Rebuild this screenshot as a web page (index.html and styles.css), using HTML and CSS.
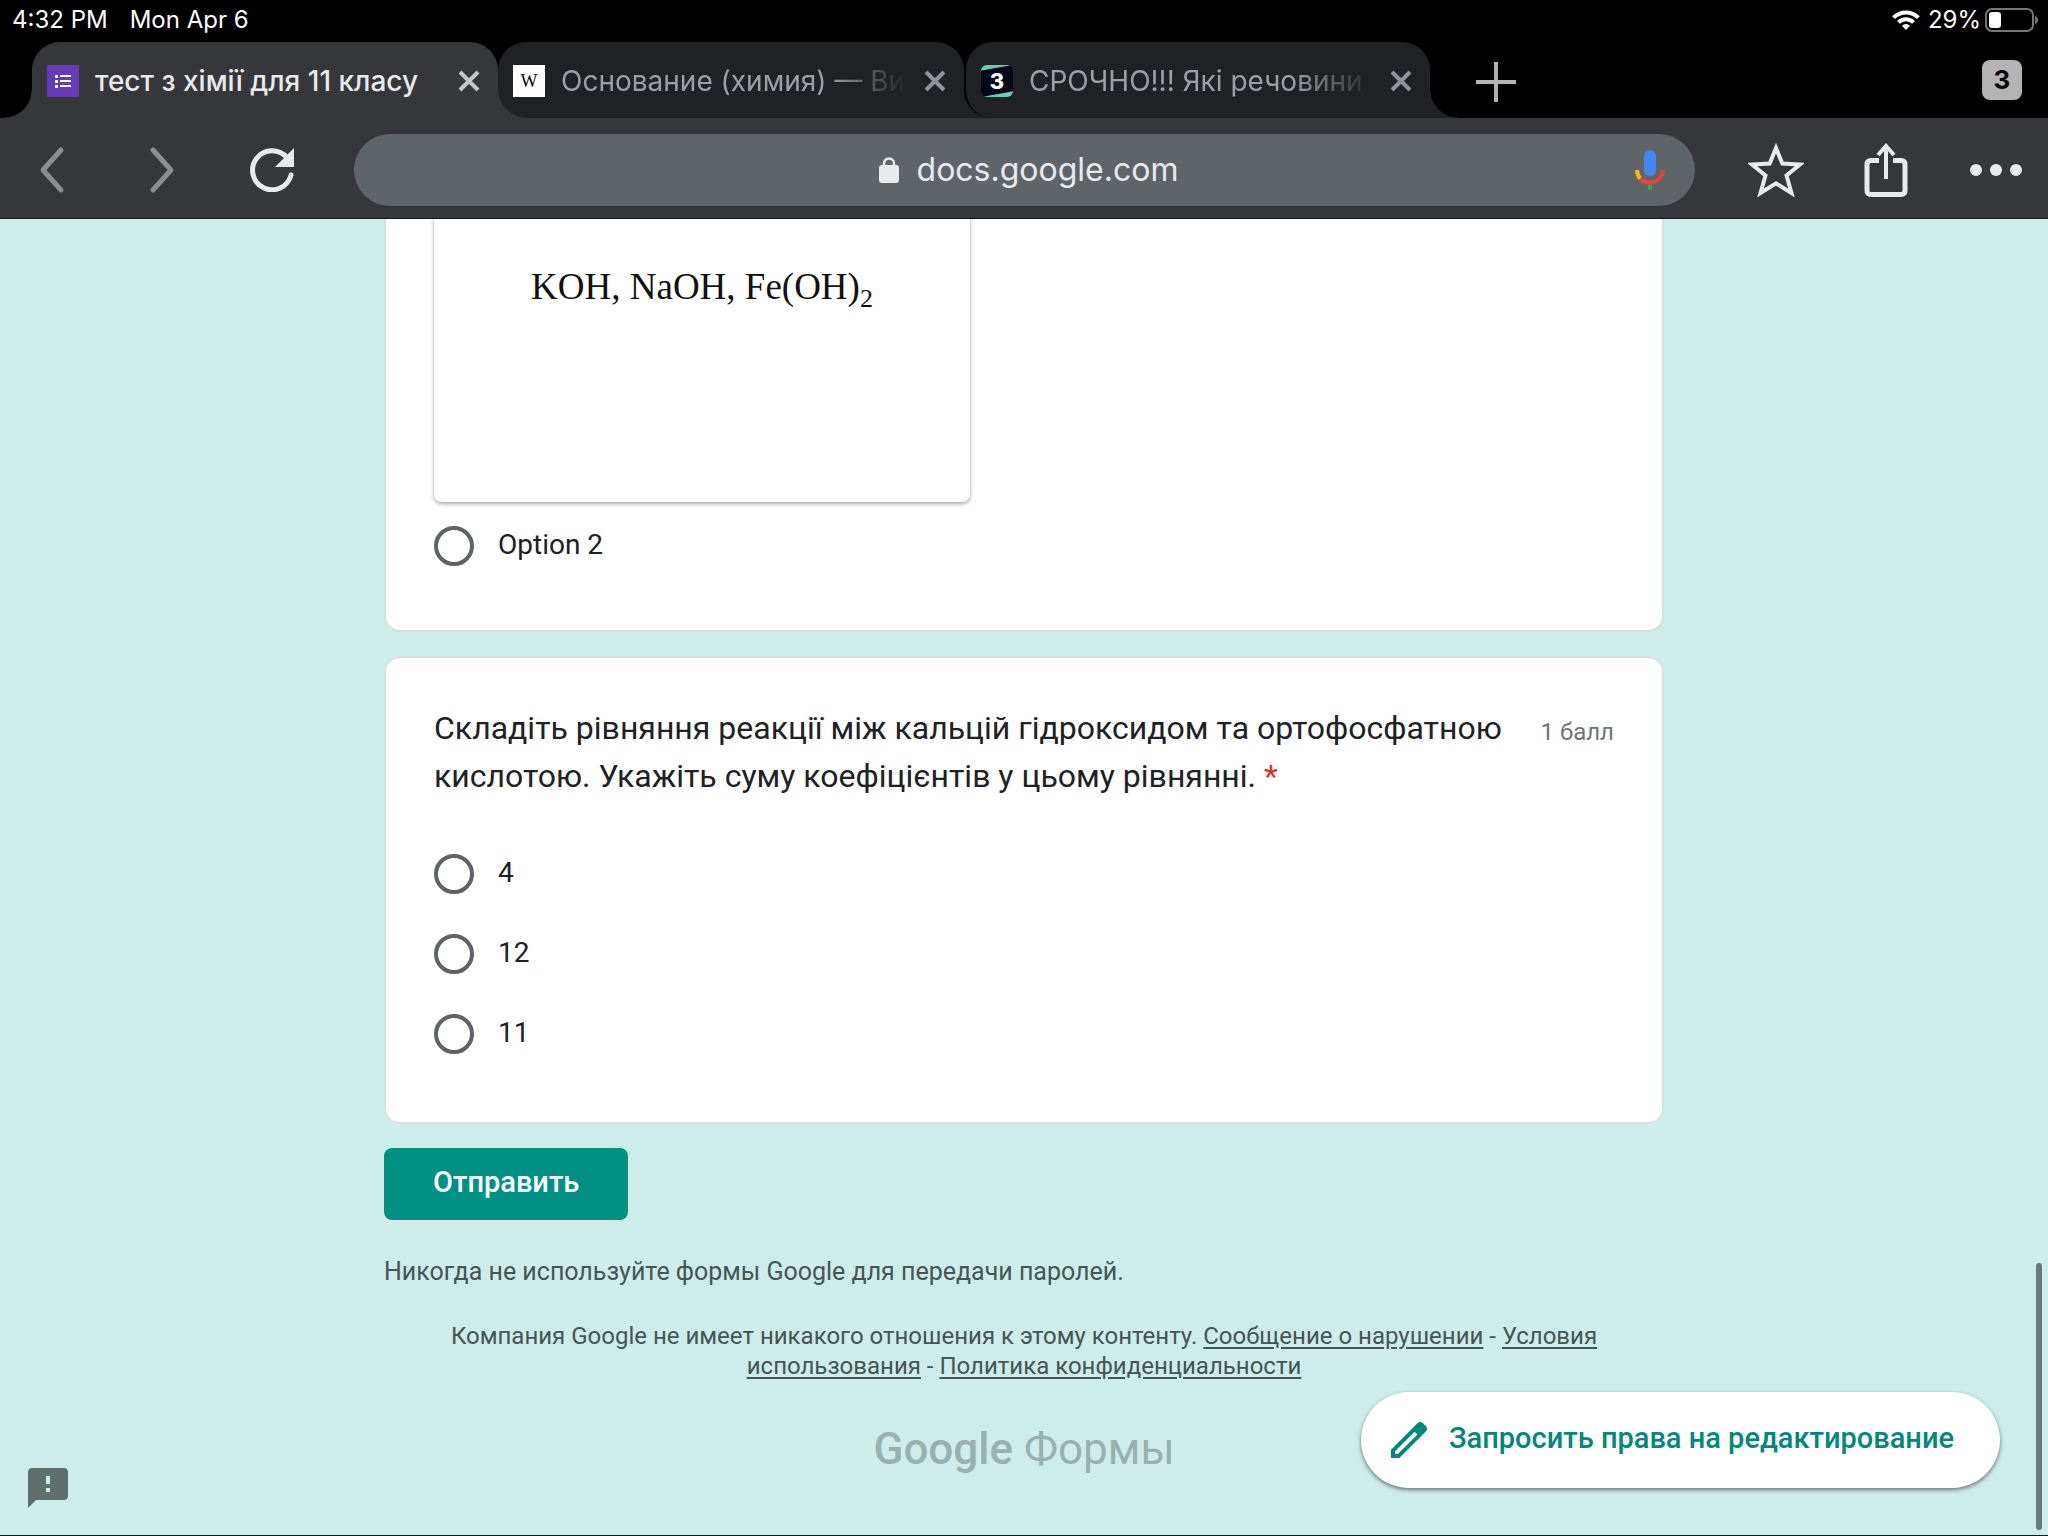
FILE: index.html
```html
<!DOCTYPE html>
<html lang="ru">
<head>
<meta charset="utf-8">
<meta name="viewport" content="width=device-width, initial-scale=1">
<title>тест з хімії для 11 класу</title>
<link rel="stylesheet" href="styles.css">
</head>
<body>
<header class="browser">
  <div class="status">
    <div class="status-left"><span>4:32 PM</span><span>Mon Apr 6</span></div>
    <div class="status-right">
      <svg width="28" height="20" viewBox="0 0 28 20" fill="none" stroke="#fff" stroke-width="4" aria-hidden="true"><path d="M1.600 7.600a17.500 17.500 0 0 1 24.800 0"/><path d="M6.500 12.400a10.600 10.600 0 0 1 15 0" /><path d="M14 20l-4-4.200a5.600 5.600 0 0 1 8 0z" fill="#fff" stroke="none"/></svg>
      <span class="battery-level">29%</span>
      <svg width="54" height="24" viewBox="0 0 54 24" aria-hidden="true"><rect x="1" y="1" width="47" height="22" rx="6" fill="none" stroke="#777" stroke-width="2"/><rect x="4" y="4" width="12" height="16" rx="3" fill="#fff"/><path d="M50 8c4 1 4 7 0 8z" fill="#777"/></svg>
    </div>
  </div>

  <nav class="tabs" aria-label="Вкладки">
    <div class="tab tab-active">
      <svg class="favicon" viewBox="0 0 32 32" aria-hidden="true"><path fill="#673ab7" d="M0 0h32v32H0z"/><path fill="#fff" d="M8 10h3v3H8zM13 10h11v2H13zM8 15h3v3H8zM13 15h11v2H13zM8 20h3v3H8zM13 20h11v2H13z"/></svg>
      <a class="tab-title" href="#">тест з хімії для 11 класу</a>
      <button class="tab-close" type="button" aria-label="Закрыть"><svg width="22" height="22" viewBox="0 0 22 22"><path d="M2 2l18 18M20 2L2 20"/></svg></button>
    </div>
    <div class="tab">
      <span class="favicon favicon-wiki">W</span>
      <a class="tab-title" href="#">Основание (химия) — Википедия</a>
      <button class="tab-close" type="button" aria-label="Закрыть"><svg width="22" height="22" viewBox="0 0 22 22"><path d="M2 2l18 18M20 2L2 20"/></svg></button>
    </div>
    <div class="tab tab-last">
      <span class="favicon favicon-znanija">3</span>
      <a class="tab-title" href="#">СРОЧНО!!! Які речовини</a>
      <button class="tab-close" type="button" aria-label="Закрыть"><svg width="22" height="22" viewBox="0 0 22 22"><path d="M2 2l18 18M20 2L2 20"/></svg></button>
    </div>
    <button class="tab-new" type="button" aria-label="Новая вкладка"><svg width="40" height="40" viewBox="0 0 40 40"><path d="M20 0v40M0 20h40" stroke="#b4b4b4" stroke-width="4"/></svg></button>
    <button class="tab-count" type="button">3</button>
  </nav>

  <div class="toolbar">
    <button class="tool tool-dim" type="button" aria-label="Назад"><svg width="30" height="50" viewBox="0 0 30 50"><path d="M24 5L6 25l18 20"/></svg></button>
    <button class="tool tool-dim" type="button" aria-label="Вперёд"><svg width="30" height="50" viewBox="0 0 30 50"><path d="M6 5l18 20L6 45"/></svg></button>
    <button class="tool" type="button" aria-label="Обновить"><svg width="44" height="44" viewBox="0 0 44 44"><path d="M41 27A19.500 19.500 0 1 1 37 9.700" stroke-linecap="round"/><path d="M44 0v19H25z" fill="#e8eaed" stroke="none"/></svg></button>
    <div class="omnibox">
      <label class="address">
        <svg width="20" height="26" viewBox="0 0 20 26" aria-hidden="true"><path d="M5 11V6.500a5 5 0 0 1 10 0V11" fill="none" stroke="#e8eaed" stroke-width="2.500"/><rect y="8" width="20" height="18" rx="3" fill="#e8eaed"/></svg>
        <input class="url" type="text" value="docs.google.com" size="15" aria-label="Адрес">
      </label>
      <button class="mic" type="button" aria-label="Голосовой поиск"><svg width="30" height="40" viewBox="0 0 30 40" fill="none" stroke-width="4"><path d="M15 32v8" stroke="#34a853"/><path d="M2 20a13 13 0 0 0 3.500 8.800" stroke="#fbbc04"/><path d="M5 28.500A13.500 13.500 0 0 0 28 20" stroke="#ea4335"/><rect x="9" width="12" height="26" rx="6" fill="#4285f4"/></svg></button>
    </div>
    <button class="tool" type="button" aria-label="В закладки"><svg width="56" height="54" viewBox="0 0 56 54"><path d="M28 5l6.300 15.500L52 21.500 38.500 32.500 43.500 50 28 40.300 12.500 50l5-17.500L4 21.500l17.700-1z" stroke-width="4"/></svg></button>
    <button class="tool" type="button" aria-label="Поделиться"><svg width="44" height="54" viewBox="0 0 44 54"><path d="M15 17.500H7q-4 0-4 4v26q0 4 4 4h30q4 0 4-4v-26q0-4-4-4h-8" stroke-width="5"/><path d="M22 36V4M14 12l8-9 8 9" stroke-width="4"/></svg></button>
    <button class="tool" type="button" aria-label="Ещё"><svg width="52" height="12" viewBox="0 0 52 12"><g fill="#e8eaed" stroke="none"><circle cx="6" cy="6" r="6"/><circle cx="26" cy="6" r="6"/><circle cx="46" cy="6" r="6"/></g></svg></button>
  </div>
</header>

<main class="page">
  <form class="form" action="#">
    <section class="card card-cut">
      <div class="answer-image">KOH, NaOH, Fe(OH)<span class="index">2</span></div>
      <label class="option"><input type="radio" name="q1"><span>Option 2</span></label>
    </section>

    <fieldset class="card">
      <div class="question">
        <div class="question-text">Складіть рівняння реакції між кальцій гідроксидом та ортофосфатною кислотою. Укажіть суму коефіцієнтів у цьому рівнянні. <span class="required">*</span></div>
        <div class="points">1 балл</div>
      </div>
      <div class="options">
        <label class="option"><input type="radio" name="q2"><span>4</span></label>
        <label class="option"><input type="radio" name="q2"><span>12</span></label>
        <label class="option"><input type="radio" name="q2"><span>11</span></label>
      </div>
    </fieldset>

    <button class="submit" type="submit">Отправить</button>
    <p class="warning">Никогда не используйте формы Google для передачи паролей.</p>
  </form>

  <footer class="footer">
    <p class="legal">Компания Google не имеет никакого отношения к этому контенту. <a href="#">Сообщение о нарушении</a> - <a href="#">Условия использования</a> - <a href="#">Политика конфиденциальности</a></p>
    <a class="logo" href="#"><span class="logo-google">Google</span> Формы</a>
  </footer>

  <button class="feedback" type="button" aria-label="Сообщить о проблеме"><svg width="40" height="40" viewBox="0 0 40 40"><path fill="#5f6f6c" d="M4 0h32q4 0 4 4v24q0 4-4 4H8l-8 8V4q0-4 4-4z"/><path fill="#ceedea" d="M18 8h4v8h-4zM18 20h4v4h-4z"/></svg></button>
  <button class="request" type="button"><svg width="48" height="48" viewBox="0 0 24 24" aria-hidden="true"><path fill="#00897b" d="M20.410 4.940l-1.350-1.350c-.78-.78-2.050-.78-2.830 0L3 16.820V21h4.180L20.410 7.770c.79-.78.79-2.050 0-2.830zm-14 14.120L5 19v-1.360l9.820-9.820 1.410 1.410-9.820 9.830z"/></svg><span>Запросить права на редактирование</span></button>
  <div class="scroll-thumb"></div>
</main>
</body>
</html>
```
FILE: styles.css
```css
* {
  box-sizing: border-box;
}

body {
  display: flex;
  flex-direction: column;
  min-height: 100vh;
  margin: 0;
  background: #ceedea;
  color: #202124;
  font-family: Roboto, "Noto Sans", sans-serif;
}

button {
  margin: 0;
  padding: 0;
  border: 0;
  background: none;
  font-family: inherit;
}

svg {
  display: block;
}

a {
  color: inherit;
}

/* Browser chrome */

.browser {
  background: #000;
  font-family: Inter, "Liberation Sans", sans-serif;
}

.status {
  display: flex;
  justify-content: space-between;
  align-items: center;
  height: 42px;
  padding: 0 9px 2px 12px;
  color: #fff;
  font-size: 24px;
  line-height: 40px;
}

.status-left {
  display: flex;
  gap: 22px;
}

.status-right {
  display: flex;
  align-items: center;
  gap: 4px;
}

.battery-level {
  padding-left: 4px;
}

.tabs {
  display: flex;
  align-items: center;
  padding: 0 26px 0 32px;
}

.tab {
  position: relative;
  display: flex;
  flex: 0 1 466px;
  align-items: center;
  gap: 16px;
  min-width: 0;
  height: 76px;
  padding: 2px 18px 0 15px;
  border-radius: 28px 28px 0 0;
  background: #202124;
  color: #9aa0a6;
}

.tab::after,
.tab-active::before {
  content: "";
  position: absolute;
  bottom: 0;
  width: 28px;
  height: 28px;
}

.tab::after {
  left: 100%;
  background: radial-gradient(circle at 100% 0, transparent 27px, #202124 28px);
}

.tab-active {
  z-index: 1;
  background: #36373b;
  color: #e8eaed;
}

.tab-active::before {
  right: 100%;
  background: radial-gradient(circle at 0 0, transparent 27px, #36373b 28px);
}

.tab-active::after {
  background: radial-gradient(circle at 100% 0, transparent 27px, #36373b 28px);
}

.tab-last {
  border-left: 2px solid #000;
  border-radius: 28px 28px 0 28px;
}

.favicon {
  flex: none;
  width: 32px;
  height: 32px;
}

.favicon-wiki {
  background: #fff;
  color: #000;
  font: 18px/32px "Liberation Serif", serif;
  text-align: center;
}

.favicon-znanija {
  border-radius: 6px;
  background: linear-gradient(170deg, #60d3ad 5px, #06061a 6px, #06061a 31px, #60d3ad 32px);
  color: #fff;
  font-size: 22px;
  font-weight: 800;
  line-height: 32px;
  text-align: center;
}

.tab-title {
  flex: 1;
  min-width: 0;
  overflow: hidden;
  font-size: 28px;
  line-height: 40px;
  text-decoration: none;
  white-space: nowrap;
  mask-image: linear-gradient(to right, #000 calc(100% - 80px), transparent);
}

.tab-active .tab-title {
  font-weight: 500;
  mask-image: none;
}

.tab-close svg {
  fill: none;
  stroke: #8e9499;
  stroke-width: 4;
}

.tab-active .tab-close svg {
  stroke: #c4c6c9;
}

.tab-new {
  margin-left: 46px;
}

.tab-new svg {
  margin-top: 3px;
}

.tab-count {
  width: 40px;
  height: 40px;
  margin-left: auto;
  border-radius: 8px;
  background: #b4b4b4;
  color: #000;
  font-size: 26px;
  font-weight: 700;
  line-height: 40px;
}

.toolbar {
  display: flex;
  align-items: center;
  gap: 6px;
  height: 101px;
  padding-top: 4px;
  border-bottom: 1px solid #16191b;
  background: #36373b;
}

.tool {
  display: flex;
  flex: 0 0 104px;
  align-items: center;
  justify-content: center;
  height: 72px;
}

.tool svg {
  fill: none;
  stroke: #e8eaed;
  stroke-width: 5;
}

.tool-dim svg {
  stroke: #8c8d90;
  stroke-linecap: round;
  stroke-linejoin: round;
}

.omnibox {
  display: grid;
  flex: 1;
  grid-template-columns: 1fr auto 1fr;
  align-items: center;
  height: 72px;
  margin: 0 23px 0 24px;
  padding: 0 30px 0 38px;
  border-radius: 36px;
  background: #5f6468;
}

.address {
  display: flex;
  grid-column: 2;
  align-items: center;
  gap: 18px;
}

.url {
  field-sizing: content;
  padding: 0;
  border: 0;
  background: none;
  color: #e8eaed;
  font: 32px/40px Inter, "Liberation Sans", sans-serif;
}

.mic {
  justify-self: end;
}

/* Form */

.page {
  position: relative;
  flex: 1;
  overflow: hidden;
  border-bottom: 1px solid #0b1a18;
}

.form {
  display: flex;
  flex-direction: column;
  align-items: stretch;
  max-width: 1280px;
  margin: 0 auto;
}

.card {
  min-width: 0;
  margin: 0 0 24px;
  padding: 46px 48px 48px;
  border: 2px solid #d8dfdf;
  border-radius: 16px;
  background: #fff;
}

.card-cut {
  padding-top: 0;
  padding-bottom: 44px;
  border-top: 0;
  border-radius: 0 0 16px 16px;
}

.answer-image {
  width: 536px;
  max-width: 100%;
  height: 291px;
  margin-top: -8px;
  padding-top: 54px;
  border-radius: 8px;
  box-shadow: 0 2px 4px rgb(0 0 0 / 35%);
  color: #111;
  font: 37px/44px "Liberation Serif", serif;
  text-align: center;
}

.index {
  font-size: 26px;
  position: relative;
  top: 8px;
}

.question {
  display: flex;
  align-items: flex-start;
  gap: 28px;
}

.question-text {
  flex: 1;
  font-size: 32px;
  line-height: 48px;
}

.required {
  color: #d93025;
}

.points {
  color: #70757a;
  font-size: 24px;
  line-height: 56px;
}

.options {
  padding-top: 34px;
}

.option {
  display: flex;
  align-items: center;
  gap: 24px;
  height: 80px;
  font-size: 28px;
  line-height: 40px;
}

.option span {
  padding-bottom: 2px;
}

.card-cut .option {
  margin-top: 4px;
}

.option input {
  width: 40px;
  height: 40px;
  margin: 0;
  border: 4px solid #5f6368;
  border-radius: 50%;
  appearance: none;
}

.submit {
  align-self: flex-start;
  height: 72px;
  padding: 0 49px 4px;
  border-radius: 8px;
  background: #009184;
  color: #fff;
  font-size: 29px;
  font-weight: 500;
}

.warning {
  margin: 36px 0 0;
  color: #445552;
  font-size: 25px;
  line-height: 32px;
}

.footer {
  display: flex;
  flex-direction: column;
  align-items: center;
  max-width: 1280px;
  margin: 0 auto;
  padding: 33px 48px 0;
}

.legal {
  margin: 0;
  color: #445552;
  font-size: 24px;
  line-height: 30px;
  text-align: center;
}

.legal a {
  text-underline-offset: 3px;
}

.logo {
  margin-top: 40px;
  color: #98b1ae;
  font-size: 44px;
  line-height: 56px;
  text-decoration: none;
}

.logo-google {
  font-weight: 500;
}

/* Overlays */

.feedback {
  position: absolute;
  bottom: 27px;
  left: 28px;
}

.request {
  position: absolute;
  right: 48px;
  bottom: 47px;
  display: flex;
  align-items: center;
  gap: 16px;
  height: 96px;
  padding: 0 46px 0 24px;
  border-radius: 48px;
  background: #fff;
  box-shadow: 0 2px 4px rgb(0 0 0 / 50%);
  color: #00897b;
  font-size: 29px;
  font-weight: 500;
}

.request span {
  padding-bottom: 4px;
}

.scroll-thumb {
  position: absolute;
  right: 6px;
  bottom: 5px;
  width: 6px;
  height: 267px;
  border-radius: 3px;
  background: #667b78;
}
```
